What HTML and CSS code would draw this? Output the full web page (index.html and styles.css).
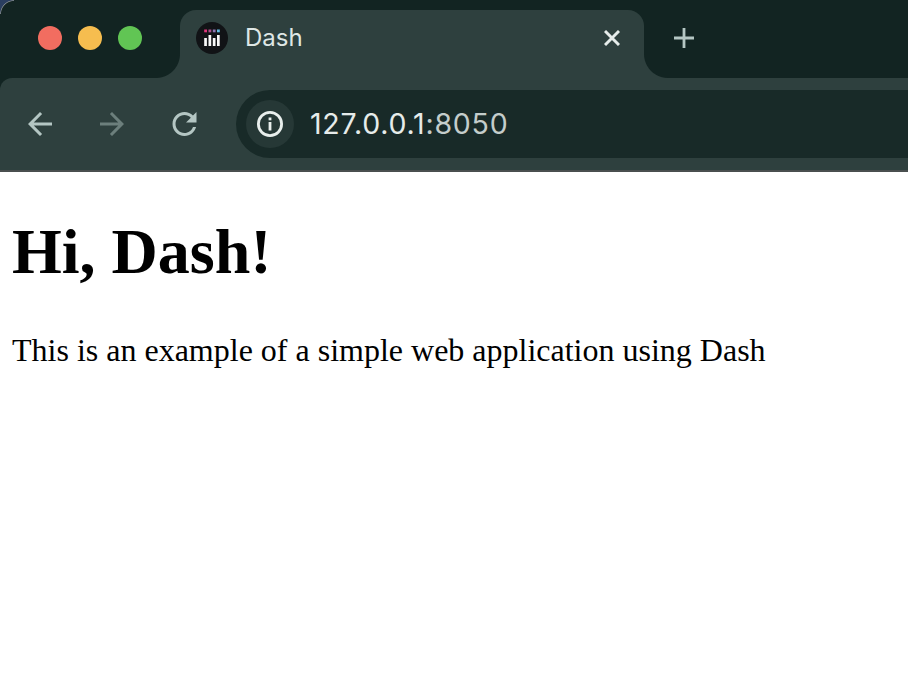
FILE: index.html
```html
<!DOCTYPE html>
<html lang="en">
<head>
<meta charset="utf-8">
<title>Dash</title>
<link rel="stylesheet" href="styles.css">
</head>
<body>
<header class="browser">
  <div class="tabstrip">
    <div class="traffic">
      <span class="light light-red"></span>
      <span class="light light-yellow"></span>
      <span class="light light-green"></span>
    </div>
    <div class="flare flare-left"></div>
    <div class="tab">
      <svg class="favicon" viewBox="0 0 32 32" aria-hidden="true">
        <circle cx="16" cy="16" r="16" fill="#111316"/>
        <rect x="8.2" y="7.5" width="2.8" height="2.8" fill="#e0357a"/>
        <rect x="12.5" y="7.5" width="2.8" height="2.8" fill="#ad4f8c"/>
        <rect x="16.8" y="7.5" width="2.8" height="2.8" fill="#9078b4"/>
        <rect x="21" y="7.5" width="2.8" height="2.8" fill="#62bde4"/>
        <rect x="8.2" y="16" width="2.7" height="8" fill="#f8f8f8"/>
        <rect x="12.5" y="13" width="2.7" height="11" fill="#f8f8f8"/>
        <rect x="16.8" y="16" width="2.7" height="8" fill="#f8f8f8"/>
        <rect x="21" y="13" width="2.7" height="11" fill="#f8f8f8"/>
      </svg>
      <span class="tab-title">Dash</span>
      <svg class="tab-close" viewBox="0 0 16 16" aria-hidden="true">
        <path d="M1 1 L15 15 M15 1 L1 15" stroke="#e6ecea" stroke-width="2.9" fill="none"/>
      </svg>
    </div>
    <div class="flare flare-right"></div>
    <svg class="new-tab" viewBox="0 0 20 20" aria-hidden="true">
      <path d="M10 0 V20 M0 10 H20" stroke="#b4c6c3" stroke-width="2.8" fill="none"/>
    </svg>
  </div>
  <div class="toolbar">
    <svg class="nav-icon" viewBox="4 4 16 16" aria-hidden="true">
      <path class="icon-on" d="M20 11H7.83l5.59-5.59L12 4l-8 8 8 8 1.41-1.41L7.83 13H20v-2z"/>
    </svg>
    <svg class="nav-icon" viewBox="4 4 16 16" aria-hidden="true">
      <path class="icon-off" d="M12 4l-1.41 1.41L16.17 11H4v2h12.17l-5.58 5.59L12 20l8-8z"/>
    </svg>
    <svg class="nav-icon nav-reload" viewBox="4 4 16 16" aria-hidden="true">
      <path class="icon-on" d="M17.65 6.35A7.96 7.96 0 0 0 12 4c-4.42 0-7.99 3.58-7.99 8s3.57 8 7.99 8c3.73 0 6.84-2.55 7.73-6h-2.08c-.82 2.33-3.04 4-5.65 4-3.31 0-6-2.69-6-6s2.69-6 6-6c1.66 0 3.14.69 4.22 1.78L13 11h7V4z"/>
    </svg>
    <div class="omnibox">
      <div class="info-chip">
        <svg class="info-icon" viewBox="0 0 28 28" aria-hidden="true">
          <circle cx="14" cy="14" r="11.6" stroke="#e9efed" stroke-width="2.8" fill="none"/>
          <rect x="12.6" y="12" width="2.8" height="8.5" fill="#e9efed"/>
          <rect x="12.6" y="7.5" width="2.8" height="2.8" fill="#e9efed"/>
        </svg>
      </div>
      <span class="url"><span class="url-host">127.0.0.1</span><span class="url-port">:8050</span></span>
    </div>
  </div>
</header>
<main class="page">
  <h1 class="title">Hi, Dash!</h1>
  <p class="lead">This is an example of a simple web application using Dash</p>
</main>
</body>
</html>
```
FILE: styles.css
```css
* { box-sizing: border-box; }
html, body { margin: 0; padding: 0; background: #fff; }
body { overflow: hidden; height: 678px; }

.browser {
  height: 172px;
  background: #122422;
  border-bottom: 2px solid #4a4f4f;
  display: flex;
  flex-direction: column;
}

.tabstrip {
  height: 78px;
  padding-top: 10px;
  background: radial-gradient(circle at 14px 14px, #122422 12.6px, #80878a 13.4px, #2a3e60 14.2px) 0 0 / 14px 14px no-repeat;
  display: flex;
  align-items: stretch;
  flex: none;
}

.traffic {
  width: 156px;
  flex: none;
  padding: 16px 0 0 38px;
  display: flex;
  gap: 16px;
  align-items: flex-start;
}
.light { width: 24px; height: 24px; border-radius: 50%; display: block; }
.light-red { background: #f26d60; }
.light-yellow { background: #f6bd4f; }
.light-green { background: #61c554; }

.flare { width: 24px; flex: none; align-self: flex-end; height: 24px; }
.flare-left { background: radial-gradient(circle at 0 0, #122422 23.5px, #2e403e 24.5px); }
.flare-right { background: radial-gradient(circle at 100% 0, #122422 23.5px, #2e403e 24.5px); }

.tab {
  width: 464px;
  flex: none;
  background: #2e403e;
  border-radius: 16px 16px 0 0;
  display: flex;
  align-items: flex-start;
  padding: 12px 24px 0 16px;
}
.favicon { width: 32px; height: 32px; flex: none; }
.tab-title {
  font: 24px/32px "Inter", "Liberation Sans", sans-serif;
  color: #dfe7e5;
  margin-left: 17px;
  flex: 1;
}
.tab-close { width: 16px; height: 16px; flex: none; margin-top: 8px; }
.new-tab { width: 20px; height: 20px; flex: none; margin: 18px 0 0 6px; }

.toolbar {
  flex: 1;
  background: #2e403e;
  border-top-left-radius: 12px;
  display: flex;
  align-items: center;
  padding-left: 28px;
}
.nav-icon { width: 24px; height: 24px; flex: none; margin-right: 48px; }
.nav-reload { width: 25px; margin-right: 39px; }
.icon-on { fill: #b4c6c3; }
.icon-off { fill: #6c7f7c; }

.omnibox {
  flex: 1;
  height: 68px;
  background: #182a28;
  border-radius: 34px 0 0 34px;
  display: flex;
  align-items: center;
  padding-left: 10px;
}
.info-chip {
  width: 48px;
  height: 48px;
  border-radius: 50%;
  background: #263836;
  display: flex;
  align-items: center;
  justify-content: center;
  flex: none;
}
.info-icon { width: 28px; height: 28px; }
.url { font: 28.5px/32px "Inter", "Liberation Sans", sans-serif; letter-spacing: 0.78px; margin-left: 16px; }
.url-host { color: #e6ecea; }
.url-port { color: #c4cdcb; }

.page { padding: 0 12px; color: #000; font-family: "Liberation Serif", "Times New Roman", serif; }
.title { font-size: 64px; line-height: 74px; font-weight: 700; margin: 43px 0 0; }
.lead { font-size: 32px; line-height: 37px; margin: 43px 0 0; }
```
